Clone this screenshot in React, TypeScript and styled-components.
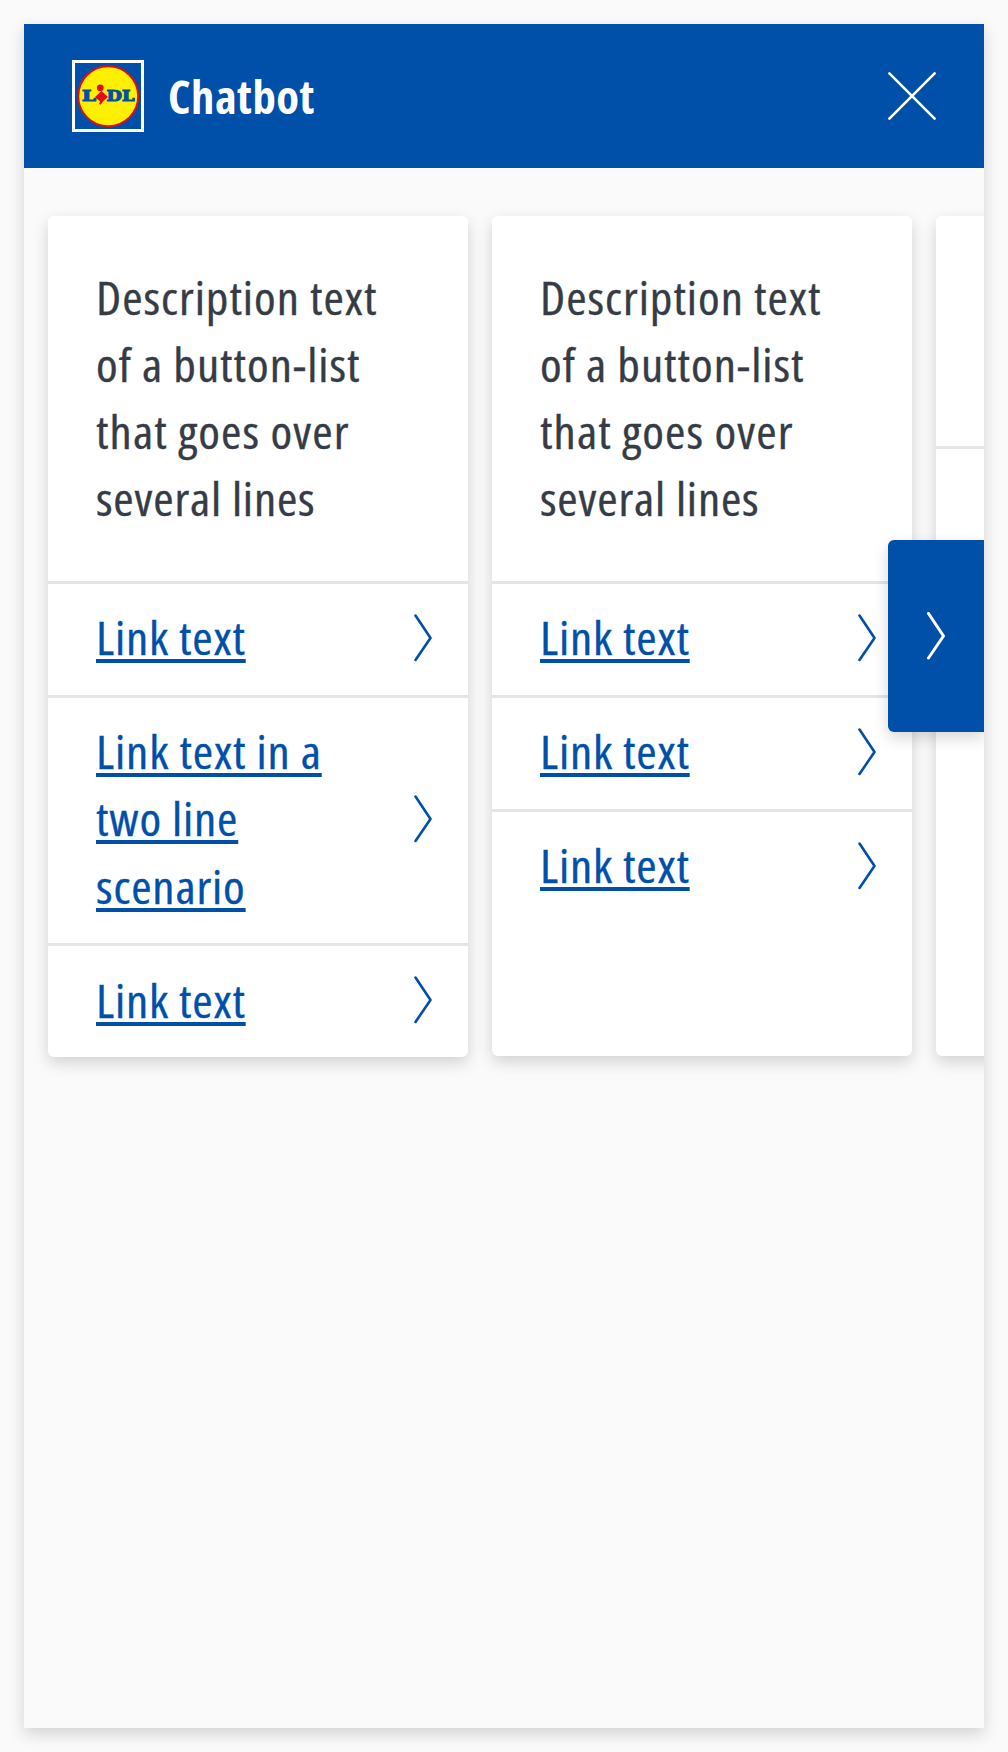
import React from "react";
import styled, { createGlobalStyle } from "styled-components";

const BLUE = "#0050aa";

const GlobalStyle = createGlobalStyle`
  * { box-sizing: border-box; }
  body {
    margin: 0;
    background: #fafafa;
    font-family: "Open Sans", "Noto Sans", sans-serif;
    font-stretch: 75%;
  }
`;

const Page = styled.div`
  padding: 24px;
  height: 1752px;
  overflow: hidden;
`;

const Panel = styled.main`
  height: 1704px;
  display: flex;
  flex-direction: column;
  background: #fafafa;
  box-shadow: 0 6px 15px rgba(0, 0, 0, 0.16);
`;

const Header = styled.header`
  flex: none;
  height: 144px;
  padding: 0 48px;
  display: flex;
  align-items: center;
  gap: 24px;
  background: ${BLUE};
`;

const LogoFrame = styled.div`
  width: 72px;
  height: 72px;
  border: 3px solid #fff;
  svg { display: block; }
`;

const Title = styled.h1`
  margin: 0;
  flex: 1;
  color: #fff;
  font-size: 46px;
  font-weight: 700;
  line-height: 68px;
`;

const IconButton = styled.button`
  width: 48px;
  height: 48px;
  padding: 0;
  border: 0;
  background: none;
  svg { display: block; }
`;

const Carousel = styled.section`
  position: relative;
  flex: 1;
  padding: 48px 24px;
  overflow: hidden;
`;

const Track = styled.div`
  display: flex;
  align-items: flex-start;
  gap: 24px;
`;

const Card = styled.article<{ $height: number }>`
  flex: none;
  width: 420px;
  height: ${(p) => p.$height}px;
  border-radius: 6px;
  background: #fff;
  box-shadow: 0 6px 15px rgba(0, 0, 0, 0.16);
`;

const Description = styled.div`
  padding: 48px 48px 48.8px;
  color: #353c46;
  font-size: 46px;
  line-height: 67px;
  white-space: nowrap;
  -webkit-text-stroke: 0.3px currentColor;
`;

const LinkRow = styled.div`
  padding: 23.4px 36px 23.4px 48px;
  display: flex;
  align-items: center;
  justify-content: space-between;
  box-shadow: inset 0 3px #e5e5e5;
`;

const LinkText = styled.a`
  color: ${BLUE};
  font-size: 46px;
  line-height: 67.2px;
  white-space: nowrap;
  -webkit-text-stroke: 0.3px currentColor;
`;

const Line = styled.span<{ $tracking?: number; $stretch?: number }>`
  display: block;
  width: max-content;
  letter-spacing: ${(p) => p.$tracking ?? 0}px;
  transform: scaleX(${(p) => p.$stretch ?? 1.07});
  transform-origin: left;
`;

const UnderlinedLine = styled(Line)`
  text-decoration: underline;
  text-decoration-thickness: 4px;
  text-underline-offset: 4px;
  text-decoration-skip-ink: none;
`;

const NextButton = styled.button`
  position: absolute;
  right: 0;
  top: 372px;
  width: 96px;
  height: 192px;
  padding: 0;
  border: 0;
  border-radius: 6px 0 0 6px;
  display: grid;
  place-items: center;
  background: ${BLUE};
  box-shadow: 0 6px 15px rgba(0, 0, 0, 0.16);
`;

const Chevron = ({ color = BLUE, width = 2.6 }: { color?: string; width?: number }) => (
  <svg width="18" height="48" viewBox="0 0 18 48" fill="none" stroke={color} strokeWidth={width} strokeLinecap="round" strokeLinejoin="round">
    <path d="M1.5 1.5L16.5 24L1.5 46" />
  </svg>
);

const Logo = () => (
  <svg width="66" height="66" viewBox="0 0 66 66">
    <circle cx="33.2" cy="33.2" r="30" fill="#fff000" stroke="#e60a14" strokeWidth="2" />
    <g fill={BLUE} stroke={BLUE} strokeWidth="1" fontFamily="'DejaVu Serif', serif" fontWeight="700" fontSize="14.6">
      <text x="7" y="38.2" textLength="14" lengthAdjust="spacingAndGlyphs">L</text>
      <text x="31.6" y="38.2" textLength="27.8" lengthAdjust="spacingAndGlyphs">DL</text>
    </g>
    <circle cx="25.3" cy="24.8" r="3.4" fill="#e60a14" />
    <path d="M20 34L26.5 28L33 34L29 37.6L25.5 41.8L24.2 40.8L25 38.6Z" fill="#e60a14" />
  </svg>
);

type TextLine = [text: string, tracking: number];

const description: TextLine[] = [
  ["Description text", 0.93],
  ["of a button-list", 0.93],
  ["that goes over", 1.06],
  ["several lines", 0.78],
];
const single: TextLine[] = [["Link text", 0.78]];
const multi: TextLine[] = [["Link text in a", 0.85], ["two line", 0.8], ["scenario", 0.8]];

const cards = [
  { height: 841, description, links: [single, multi, single] },
  { height: 840, description, links: [single, single, single] },
  { height: 840, description: [] as TextLine[], links: [[] as TextLine[]] },
];

const Blank = styled.div`
  height: 133.4px;
`;

export default function App() {
  return (
    <>
      <GlobalStyle />
      <Page>
        <Panel>
          <Header>
            <LogoFrame><Logo /></LogoFrame>
            <Title><Line $tracking={0.5} $stretch={1.015}>Chatbot</Line></Title>
            <IconButton aria-label="Close">
              <svg width="48" height="48" viewBox="0 0 48 48" stroke="#fff" strokeWidth="2.6" strokeLinecap="round">
                <path d="M1.4 1.4L46.6 46.6M46.6 1.4L1.4 46.6" />
              </svg>
            </IconButton>
          </Header>
          <Carousel>
            <Track>
              {cards.map((card, i) => (
                <Card key={i} $height={card.height}>
                  <Description>
                    {card.description.length === 0 ? <Blank /> : card.description.map(([t, s]) => <Line key={t} $tracking={s}>{t}</Line>)}
                  </Description>
                  {card.links.map((lines, j) => (
                    <LinkRow key={j}>
                      <LinkText>
                        {lines.map(([t, s]) => <UnderlinedLine key={t} $tracking={s}>{t}</UnderlinedLine>)}
                      </LinkText>
                      {lines.length > 0 && <Chevron />}
                    </LinkRow>
                  ))}
                </Card>
              ))}
            </Track>
            <NextButton aria-label="Next"><Chevron color="#fff" width={3} /></NextButton>
          </Carousel>
        </Panel>
      </Page>
    </>
  );
}
